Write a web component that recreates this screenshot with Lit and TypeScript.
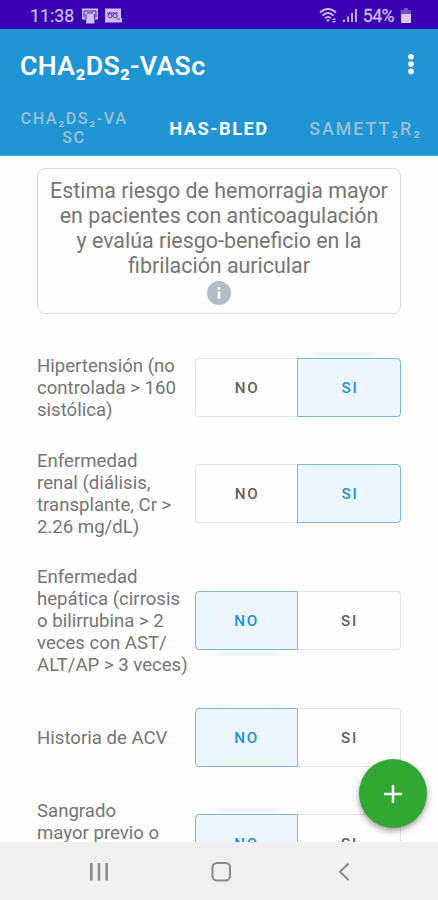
import { LitElement, html, css } from "lit";
import { customElement, property } from "lit/decorators.js";
import { classMap } from "lit/directives/class-map.js";

@customElement("yes-no-toggle")
class YesNoToggle extends LitElement {
  @property({ type: Boolean }) value = false;

  static styles = css`
    :host { display: grid; grid-template-columns: 103px 103px; width: 206px; height: 59px; }
    .opt {
      box-sizing: border-box;
      display: flex; align-items: center; justify-content: center;
      border: 1px solid #e4e4e4; background: transparent; color: #606060;
      font: 500 15.2px Roboto, sans-serif; letter-spacing: 1.7px; padding: 1px 0 0 0;
    }
    .no { border-radius: 4px 0 0 4px; }
    .si { border-radius: 0 4px 4px 0; margin-left: -1px; padding-left: 2px; }
    .on { border-color: #7db8d6; background: #edf6fd; color: #2094cf; z-index: 1; }
    .no:not(.on) { border-right: none; }
    .si:not(.on) { border-left: none; }
  `;

  render() {
    return html`
      <button class=${classMap({ opt: true, no: true, on: !this.value })}>NO</button>
      <button class=${classMap({ opt: true, si: true, on: this.value })}>SI</button>
    `;
  }
}

const criteria: { lines: string[]; value: boolean; tall?: boolean }[] = [
  { lines: ["Hipertensión (no", "controlada > 160", "sistólica)"], value: true },
  { lines: ["Enfermedad", "renal (diálisis,", "transplante, Cr >", "2.26 mg/dL)"], value: true },
  { lines: ["Enfermedad", "hepática (cirrosis", "o bilirrubina > 2", "veces con AST/", "ALT/AP > 3 veces)"], value: false },
  { lines: ["Historia de ACV"], value: false },
  { lines: ["Sangrado", "mayor previo o"], value: false, tall: true },
];

@customElement("app-root")
class AppRoot extends LitElement {
  static styles = css`
    :host {
      display: flex; flex-direction: column; position: relative;
      width: 438px; height: 900px; overflow: hidden;
      background: #fefefe; font-family: Roboto, sans-serif; color: #757575;
    }
    svg { display: block; }
    .status {
      flex: none; height: 29px; box-sizing: border-box; background: #3a00b3; color: #cdbdf0;
      display: flex; align-items: center; padding: 2px 27px 0 30px; font-size: 17.8px;
    }
    .clock { width: 44px; margin-right: 8px; -webkit-text-stroke: 0.2px; }
    .status .grow { flex: 1; }
    .pct { margin: 0 7px 0 6px; letter-spacing: -0.6px; -webkit-text-stroke: 0.3px; }
    header { flex: none; height: 127px; background: #1f95d3; box-sizing: border-box; border-bottom: 1px solid #3ba4db; }
    .bar { display: flex; align-items: center; justify-content: space-between; height: 72px; padding: 0 22px 0 20px; }
    h1 { margin: 0; font-size: 26.6px; font-weight: 500; color: #fff; letter-spacing: 0.45px; -webkit-text-stroke: 0.2px; }
    .tabs { display: grid; grid-template-columns: 146px 146px 146px; height: 54px; }
    .tab {
      display: flex; align-items: center; justify-content: center; text-align: center;
      font-size: 16.2px; font-weight: 500; line-height: 19px; letter-spacing: 1.55px; color: #9bbfd3;
      padding-left: 2px;
    }
    .tab.wide { font-size: 17.8px; letter-spacing: 2px; padding-left: 1px; }
    .tab.active { color: #fff; font-weight: 700; font-size: 18.3px; letter-spacing: 1.5px; padding: 0; }
    main { flex: 1; min-height: 0; overflow: hidden; padding: 12px 37px 0; }
    .card {
      box-sizing: border-box; height: 146px; border: 1px solid #d9d9d9; border-radius: 8px;
      display: flex; flex-direction: column; align-items: center; padding-top: 9px;
      font-size: 21.4px; line-height: 25px; text-align: center; white-space: nowrap;
    }
    .card svg { margin-top: 3px; }
    .list { padding-top: 25px; }
    .row { display: flex; align-items: center; justify-content: space-between; padding: 14px 0; min-height: 68px; }
    .label { font-size: 18.6px; line-height: 22px; white-space: nowrap; padding-top: 1px; margin-bottom: -1px; }
    .label.tall { min-height: 88px; }
    yes-no-toggle { flex: none; }
    nav { flex: none; height: 58px; background: #f0f0f0; }
    .fab {
      position: absolute; left: 359px; top: 759px; width: 68px; height: 69px; border-radius: 50%;
      background: #31a831; box-shadow: 0 3px 6px rgba(0, 0, 0, 0.38);
      display: flex; align-items: center; justify-content: center; z-index: 3;
    }
  `;

  render() {
    return html`
      <div class="status">
        <span class="clock">11:38</span>
        <svg width="42" height="16" viewBox="0 0 42 16">
          <path d="M0 0.5H16V11.5H12.5V15.5H4V11.5H0Z" fill="#cdbdf0"/>
          <path d="M2 9.5V3H14V9.5M5 5H11M4 11.5V6M12.5 11.5V6" stroke="#4b1bb8" fill="none"/>
          <path d="M23 0.5H39V10H40V14.5H23Z" fill="#cdbdf0"/>
          <path d="M26 8C26 5 30 5 30 8S26 10 26 8M31 8C31 5 35 5 35 8S31 10 31 8M25 5H36M35 11H38" stroke="#4b1bb8" fill="none"/>
        </svg>
        <span class="grow"></span>
        <svg width="38" height="17" viewBox="0 0 38 17">
          <g fill="none" stroke="#cdbdf0" stroke-width="1.7">
            <path d="M1 5.5Q9 -1.5 17 5.5M3.5 8.5Q9 3.5 14.5 8.5M6 11.3Q9 8.5 12 11.3"/>
          </g>
          <path d="M7 12.5H11L9 15ZM15 11L17 13H13ZM13 14H17L15 16Z" fill="#cdbdf0"/>
          <path d="M25 15V12.5M29 15V9.5M33 15V6M37 15V2" stroke="#cdbdf0" stroke-width="1.8"/>
        </svg>
        <span class="pct">54%</span>
        <svg width="10" height="16" viewBox="0 0 10 16">
          <path d="M3 0H7V2H10V6H0V2H3Z" fill="#7750cb"/><path d="M0 6H10V15H0Z" fill="#d8caf3"/>
        </svg>
      </div>
      <header>
        <div class="bar">
          <h1>CHA₂DS₂-VASc</h1>
          <svg width="10" height="24" viewBox="0 0 10 24" fill="#fff">
            <circle cx="5" cy="3.8" r="2.8"/><circle cx="5" cy="11.1" r="2.8"/><circle cx="5" cy="18.4" r="2.8"/>
          </svg>
        </div>
        <div class="tabs">
          <div class="tab">CHA₂DS₂-VA<br />SC</div>
          <div class="tab active">HAS-BLED</div>
          <div class="tab wide">SAMETT₂R₂</div>
        </div>
      </header>
      <main>
        <div class="card">
          <div>Estima riesgo de hemorragia mayor<br />en pacientes con anticoagulación<br />y evalúa riesgo-beneficio en la<br />fibrilación auricular</div>
          <svg width="24" height="24" viewBox="0 0 24 24">
            <circle cx="12" cy="12" r="12" fill="#b0bec5"/>
            <path d="M10.7 6.2H13.3V8.8H10.7ZM10.7 10.5H13.3V17.8H10.7Z" fill="#fff"/>
          </svg>
        </div>
        <div class="list">
          ${criteria.map((c) => html`
            <div class="row">
              <div class=${classMap({ label: true, tall: !!c.tall })}>${c.lines.map((l) => html`<div>${l}</div>`)}</div>
              <yes-no-toggle .value=${c.value}></yes-no-toggle>
            </div>`)}
        </div>
      </main>
      <div class="fab">
        <svg width="20" height="20" viewBox="0 0 20 20"><path d="M10 1V19M1 10H19" stroke="#fff" stroke-width="2.5"/></svg>
      </div>
      <nav>
        <svg width="438" height="58" viewBox="0 0 438 58" fill="none" stroke="#8a8a8a">
          <path d="M91.3 21V38.5M99 21V38.5M106.7 21V38.5" stroke-width="2.6"/>
          <rect x="212.5" y="21" width="17.5" height="17.5" rx="4.5" stroke-width="2"/>
          <path d="M348.5 21.5L340 29.7L348.5 38" stroke-width="2"/>
        </svg>
      </nav>
    `;
  }
}
